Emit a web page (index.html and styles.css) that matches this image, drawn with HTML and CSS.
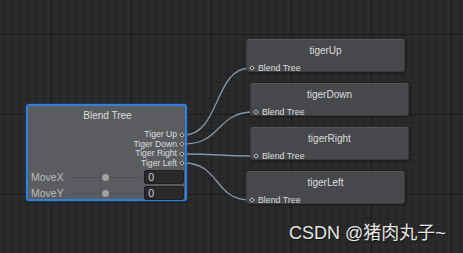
FILE: index.html
```html
<!DOCTYPE html>
<html lang="en">
<head>
    <meta charset="UTF-8">
    <title>Animator - Blend Tree</title>
    <link rel="stylesheet" href="styles.css">
</head>
<body>
    <div class="canvas">
        <!-- connections between the blend tree and its motions -->
        <svg class="links" width="463" height="253">
            <path d="M184 135 C 220 135, 214 68, 250 68"/>
            <path d="M184 144 C 222 144, 216 112, 254 112"/>
            <path d="M184 154 C 222 154, 216 156, 254 156"/>
            <path d="M184 163 C 220 163, 214 200, 250 200"/>
        </svg>

        <div class="node blend">
            <div class="title">Blend Tree</div>
            <ul class="outputs">
                <li>Tiger Up<span class="port"></span></li>
                <li>Tiger Down<span class="port"></span></li>
                <li>Tiger Right<span class="port"></span></li>
                <li>Tiger Left<span class="port"></span></li>
            </ul>
            <div class="param">
                <span class="label">MoveX</span>
                <span class="slider"><span class="knob"></span></span>
                <span class="field">0</span>
            </div>
            <div class="param">
                <span class="label">MoveY</span>
                <span class="slider"><span class="knob"></span></span>
                <span class="field">0</span>
            </div>
        </div>

        <div class="node clip up">
            <div class="title">tigerUp</div>
            <div class="input"><span class="port"></span>Blend Tree</div>
        </div>
        <div class="node clip down">
            <div class="title">tigerDown</div>
            <div class="input"><span class="port"></span>Blend Tree</div>
        </div>
        <div class="node clip right">
            <div class="title">tigerRight</div>
            <div class="input"><span class="port"></span>Blend Tree</div>
        </div>
        <div class="node clip left">
            <div class="title">tigerLeft</div>
            <div class="input"><span class="port"></span>Blend Tree</div>
        </div>

        <div class="watermark">CSDN @猪肉丸子~</div>
    </div>
</body>
</html>
```

FILE: styles.css
```css
body {
    margin: 0;
    padding: 0;
    background-color: #292929;
    font-family: "Liberation Sans", Arial, sans-serif;
}

.canvas {
    position: relative;
    width: 463px;
    height: 253px;
    overflow: hidden;
    background-color: #2a2a2a;
    background-image:
        linear-gradient(to right, #1a1a1a 1px, transparent 1px),
        linear-gradient(to bottom, #1a1a1a 1px, transparent 1px),
        linear-gradient(to right, #232323 1px, transparent 1px),
        linear-gradient(to bottom, #232323 1px, transparent 1px);
    background-size: 80px 80px, 80px 80px, 8px 8px, 8px 8px;
    background-position: 51px 0, 0 34px, 3px 0, 0 2px;
}

.links {
    position: absolute;
    left: 0;
    top: 0;
}

.links path {
    fill: none;
    stroke: #8596ab;
    stroke-width: 1.3;
}

.node {
    position: absolute;
    box-sizing: border-box;
    color: #dedede;
}

.title {
    font-size: 10px;
    line-height: 12px;
    text-align: center;
}

.port {
    display: inline-block;
    width: 2px;
    height: 2px;
    background: #151515;
    border: 1px solid #c8c8c8;
    transform: rotate(45deg);
}

/* blend tree node */

.blend {
    left: 26px;
    top: 104px;
    width: 161px;
    height: 97px;
    padding: 4px 1px 0 3px;
    background: #5a5c60;
    border: 2px solid #2f7fdc;
    border-radius: 3px;
    box-shadow: 0 0 2px #1f5fa8;
}

.outputs {
    list-style: none;
    margin: 8px 0 0 0;
    padding: 0;
}

.outputs li {
    display: flex;
    justify-content: flex-end;
    align-items: center;
    gap: 3px;
    height: 9.5px;
    font-size: 8.6px;
    line-height: 9.5px;
}

.param {
    display: flex;
    align-items: center;
    height: 13.5px;
    margin-top: 2.5px;
}

.label {
    width: 41px;
    font-size: 10.5px;
    color: #bdbdbd;
}

.slider {
    position: relative;
    width: 70px;
    height: 1px;
    background: #4e4f53;
    margin-right: 3px;
}

.knob {
    position: absolute;
    left: 30px;
    top: -3px;
    width: 7px;
    height: 7px;
    border-radius: 50%;
    background: #a2a2a2;
}

.field {
    box-sizing: border-box;
    width: 40px;
    height: 14px;
    padding-left: 3px;
    background: #2a2a2a;
    border: 1px solid #1e1e1e;
    border-radius: 2px;
    font-size: 10.5px;
    line-height: 12px;
    color: #d2d2d2;
}

/* motion nodes */

.clip {
    width: 159px;
    height: 33px;
    padding-top: 5px;
    background: #46484b;
    border: 1px solid #3a3b3d;
    border-top-color: #55575a;
    border-radius: 3px;
    box-shadow: 1px 1px 2px rgba(0, 0, 0, 0.4);
}

.clip .input {
    display: flex;
    align-items: center;
    gap: 4px;
    margin-top: 6px;
    padding-left: 3px;
    font-size: 8.8px;
    line-height: 10px;
}

.up {
    left: 246px;
    top: 39px;
}

.down {
    left: 250px;
    top: 83px;
}

.right {
    left: 250px;
    top: 127px;
}

.left {
    left: 246px;
    top: 171px;
}

.watermark {
    position: absolute;
    left: 289px;
    top: 222px;
    font-size: 18px;
    line-height: 22px;
    color: #e6e6e6;
    text-shadow: 1px 1px 1px rgba(0, 0, 0, 0.6);
    font-family: "Liberation Sans", "Noto Sans CJK SC", sans-serif;
}
```
